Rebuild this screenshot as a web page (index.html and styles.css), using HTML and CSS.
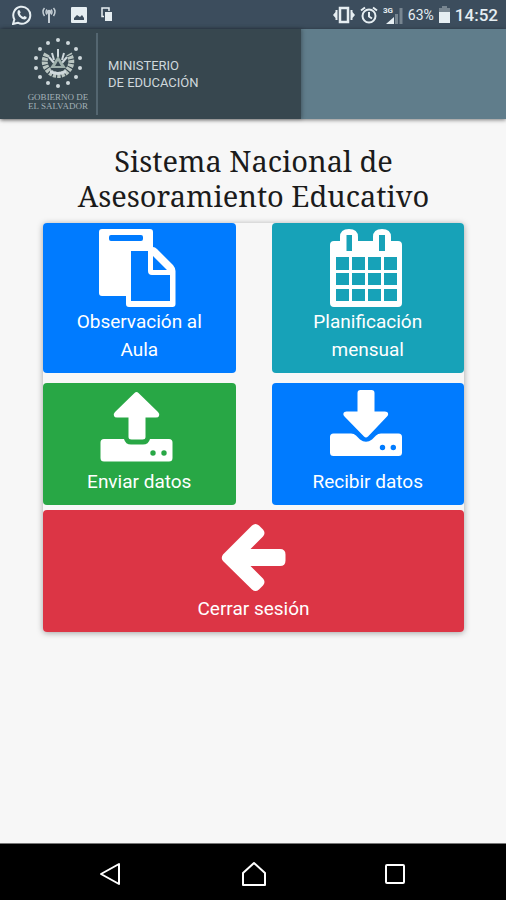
FILE: index.html
```html
<!DOCTYPE html>
<html lang="es">
<head>
    <meta charset="UTF-8">
    <meta name="viewport" content="width=device-width, initial-scale=1.0">
    <title>Sistema Nacional de Asesoramiento Educativo</title>
    <link rel="stylesheet" href="styles.css">
</head>
<body>
    <div class="status-bar">
        <div class="status-left">
            <svg width="20" height="20" viewBox="0 0 20 20">
                <path d="M1 19l1.400-4.600A8.500 8.500 0 1 1 5.800 17.700z" fill="none" stroke="currentColor" stroke-width="2"/>
                <path d="M6 5.500q1-1 1.800 0l.9 2-.9 1.300q1.200 2.200 3.400 3.200l1.200-1.100 2.300 1.100q.3 2-2 2.500-3 0-5.700-3Q4.500 8 6 5.500z" fill="currentColor"/>
            </svg>
            <svg class="dim" width="14" height="16" viewBox="0 0 14 16" fill="none" stroke="currentColor" stroke-width="1.500">
                <path d="M7 5v11" stroke-width="2"/>
                <path d="M2.500 1q-3 3.500 0 8M11.500 1q3 3.500 0 8M5 2.500q-2 2.500 0 5M9 2.500q2 2.500 0 5"/>
                <circle cx="7" cy="5" r="1.500" fill="currentColor"/>
            </svg>
            <svg width="16" height="16" viewBox="0 0 16 16" fill="currentColor">
                <path fill-rule="evenodd" d="M1 0h14q1 0 1 1v14q0 1-1 1H1q-1 0-1-1V1q0-1 1-1zM3 13h10v-2l-2-3-2 2-3-2-3 3z"/>
            </svg>
            <svg width="14" height="15" viewBox="0 0 12 15">
                <path d="M3 9.500H1V1h7v3" fill="none" stroke="currentColor" stroke-width="1.500"/>
                <path d="M4 5h7v9H4z" fill="currentColor"/>
            </svg>
        </div>
        <div class="status-right">
            <svg width="22" height="18" viewBox="0 0 22 18">
                <path d="M7 2h8v14H7z" fill="none" stroke="currentColor" stroke-width="2.500"/>
                <path d="M4.500 4v10H2.500v-2L0 9l2.500-3V4zM17.500 4v10h2v-2L22 9l-2.500-3V4z" fill="currentColor"/>
            </svg>
            <svg width="18" height="18" viewBox="0 0 18 18" fill="none" stroke="currentColor" stroke-width="2">
                <circle cx="9" cy="10" r="6.500"/>
                <path d="M9 6v4.500l3 2M1 4.500l4-3M17 4.500l-4-3"/>
            </svg>
            <svg width="20" height="18" viewBox="0 0 20 18" fill="currentColor">
                <text x="0" y="7" font-size="8" font-weight="700">3G</text>
                <path d="M3 18l8-7v7z"/>
                <path d="M12 8h3v10h-3zM16.500 2h3v16h-3z" opacity=".35"/>
            </svg>
            <span class="battery-text">63%</span>
            <svg width="11" height="17" viewBox="0 0 11 17" fill="currentColor">
                <path d="M3 0h5v2h3v4H0V2h3z" opacity=".35"/>
                <path d="M0 6h11v11H0z"/>
            </svg>
            <span class="clock">14:52</span>
        </div>
    </div>

    <header class="header">
        <div class="brand">
            <div class="logo">
                <svg width="52" height="52" viewBox="0 0 52 52" fill="currentColor">
                    <g>
                        <circle cx="26" cy="3" r="2"/><circle cx="36" cy="6" r="2"/>
                        <circle cx="44" cy="12" r="2"/><circle cx="48" cy="21" r="2"/>
                        <circle cx="48" cy="31" r="2"/><circle cx="44" cy="40" r="2"/>
                        <circle cx="36" cy="46" r="2"/><circle cx="26" cy="49" r="2"/>
                        <circle cx="16" cy="46" r="2"/><circle cx="8" cy="40" r="2"/>
                        <circle cx="4" cy="31" r="2"/><circle cx="4" cy="21" r="2"/>
                        <circle cx="8" cy="12" r="2"/><circle cx="16" cy="6" r="2"/>
                    </g>
                    <path d="M15 17q-5 9 1 16 4 5 10 5t10-5q6-7 1-16" fill="none" stroke="#b9c5c1" stroke-width="6" stroke-dasharray="3 1"/>
                    <path d="M26 12v8M20 16l2 7M32 16l-2 7M17 20l5 6M35 20l-5 6" stroke="#cfd8dc" stroke-width="2" fill="none"/>
                    <path d="M26 19l8 12H18z" fill="#9fb0ac"/>
                    <path d="M26 24l3 5h-6z" fill="#37474f"/>
                    <path d="M18 33q8 4 16 0v3q-8 4-16 0z" fill="#cfd8dc"/>
                </svg>
                <div class="logo-text">GOBIERNO DE<br>EL SALVADOR</div>
            </div>
            <div class="ministry">MINISTERIO<br>DE EDUCACIÓN</div>
        </div>
    </header>

    <main class="content">
        <h1>Sistema Nacional de Asesoramiento Educativo</h1>

        <div class="menu">
            <button type="button" class="btn btn-primary">
                <svg class="icon" viewBox="0 0 80 79" fill="currentColor">
                    <path fill-rule="evenodd" d="M3 0H51a3 3 0 0 1 3 3V18q2 0 4 2L74 36q2.500 3 2.500 6V75a3 3 0 0 1-3 3H30a3 3 0 0 1-3-3V67H3a3 3 0 0 1-3-3V3a3 3 0 0 1 3-3zM12 6q-2 0-2 2v2q0 2 2 2h30q2 0 2-2V8q0-2-2-2zM32 22v50h39V46H53q-4 0-4-4V22zM54 27v14h14z"/>
                </svg>
                <span>Observación al Aula</span>
            </button>
            <button type="button" class="btn btn-info">
                <svg class="icon" viewBox="0 0 80 79" fill="currentColor">
                    <path fill-rule="evenodd" d="M6 12h6V8q0-8 9-8T30 8v4h15V8q0-8 9-8T63 8v4h7q4 0 4 4v58q0 4-4 4H6q-4 0-4-4V16q0-4 4-4zM18.500 6v16h5.500V6zM51 6v16h6V6zM8 28v13h13V28zM24 28v13h13V28zM40 28v13h13V28zM56 28v13h13V28zM8 44v12h13V44zM24 44v12h13V44zM40 44v12h13V44zM56 44v12h13V44zM8 60v12h13V60zM24 60v12h13V60zM40 60v12h13V60zM56 60v12h13V60z"/>
                </svg>
                <span>Planificación mensual</span>
            </button>
            <button type="button" class="btn btn-success">
                <svg class="icon" viewBox="0 0 80 79" fill="currentColor">
                    <path d="M35.500 4q2-2 4 0L59 23q2 2 1 4-.5 1.500-3 1.500H46.500V48q0 2.500-3 2.500h-11q-3 0-3-2.500V28.500H18q-2.500 0-3-1.500-1-2 1-4z"/>
                    <path fill-rule="evenodd" d="M5 50h20q1.500 5.500 7 5.500h12q5.500 0 7-5.500h19q3.500 0 3.500 3.500v15.500q0 3.500-3.500 3.500H5q-3.500 0-3.500-3.500V53.500Q1.500 50 5 50zM51.300 64a2.700 2.700 0 1 0 5.400 0 2.700 2.700 0 1 0-5.400 0zM62.300 64a2.700 2.700 0 1 0 5.400 0 2.700 2.700 0 1 0-5.400 0z"/>
                </svg>
                <span>Enviar datos</span>
            </button>
            <button type="button" class="btn btn-primary">
                <svg class="icon" viewBox="0 0 80 79" fill="currentColor">
                    <path d="M32.500 1h11q3 0 3 3v18.500H57q2.500 0 3 1.500.7 2-1 3.500L40 47.500q-2 2-4 0L16.500 27.500q-1.700-1.500-1-3.500.5-1.500 3-1.500h11V4q0-3 3-3z"/>
                    <path fill-rule="evenodd" d="M5.500 44.500H23q3 0 5 2l4 4q6 4.500 12 0l4-4q2-2 5-2h17.500q3.500 0 3.500 3.500v15.500q0 3.500-3.500 3.500h-65q-3.500 0-3.500-3.500V48q0-3.500 3.500-3.500zM51.800 58.500a2.700 2.700 0 1 0 5.400 0 2.700 2.700 0 1 0-5.400 0zM62.600 58.500a2.700 2.700 0 1 0 5.400 0 2.700 2.700 0 1 0-5.400 0z"/>
                </svg>
                <span>Recibir datos</span>
            </button>
            <button type="button" class="btn btn-danger btn-block">
                <svg class="icon" viewBox="0 0 80 79" fill="currentColor">
                    <path d="M9 38.500L38 9.500q3.500-3 7 0l4 4q3 3.500 0 7L36.500 33H66q5.500 0 5.500 5.500v6Q71.500 50 66 50H36.500L49 62.500q3 3.500 0 7l-4 4q-3.500 3-7 0L9 45q-2.500-3 0-6.500z"/>
                </svg>
                <span>Cerrar sesión</span>
            </button>
        </div>
    </main>

    <nav class="nav-bar">
        <button type="button" aria-label="Atrás">
            <svg width="26" height="26" viewBox="0 0 26 26"><path d="M20 3v20L2 13z"/></svg>
        </button>
        <button type="button" aria-label="Inicio">
            <svg width="26" height="26" viewBox="0 0 26 26"><path d="M3 24V12L14 2l11 10v12z"/></svg>
        </button>
        <button type="button" aria-label="Recientes">
            <svg width="26" height="26" viewBox="0 0 26 26"><rect x="5" y="4" width="18" height="18" rx="1"/></svg>
        </button>
    </nav>
</body>
</html>
```
FILE: styles.css
```css
* {
    box-sizing: border-box;
}

body {
    margin: 0;
    min-height: 100vh;
    display: flex;
    flex-direction: column;
    background-color: #f7f7f7;
    font-family: Roboto, sans-serif;
}

svg {
    display: block;
}

/* Barra de estado */
.status-bar {
    display: flex;
    justify-content: space-between;
    align-items: center;
    height: 29px;
    padding: 0 8px 0 12px;
    background-color: #3c4d5d;
    color: #e6eef2;
}

.status-left,
.status-right {
    display: flex;
    align-items: center;
}

.status-left {
    gap: 13px;
}

.status-left .dim {
    margin: 0 2px 0 -3px;
    opacity: 0.8;
}

.status-right {
    gap: 5px;
}

.battery-text {
    font-size: 14px;
}

.clock {
    font-size: 17px;
    font-weight: 500;
}

/* Encabezado */
.header {
    display: flex;
    height: 90px;
    background-color: #607d8b;
    box-shadow: 0 1px 4px rgba(0, 0, 0, 0.5);
}

.brand {
    display: flex;
    align-items: center;
    width: 59.4%;
    background-color: #37474f;
    box-shadow: 1px 0 4px rgba(0, 0, 0, 0.3);
    color: #cfd8dc;
}

.logo {
    display: flex;
    flex-direction: column;
    align-items: center;
    width: 98px;
    height: 82px;
    padding: 4px 0 0 20px;
    border-right: 2px solid #546670;
}

.logo-text {
    padding-top: 4px;
    color: #a3b1b7;
    font-family: "Liberation Serif", serif;
    font-size: 9px;
    line-height: 9px;
    text-align: center;
    white-space: nowrap;
}

.ministry {
    padding-left: 10px;
    font-size: 13px;
    line-height: 17px;
}

/* Contenido */
.content {
    flex: 1;
    padding: 24px 42px 24px 43px;
}

h1 {
    margin: 0 0 10px;
    color: #1b1b1b;
    font-family: "Noto Serif", "Liberation Serif", serif;
    font-size: 29px;
    font-weight: 400;
    line-height: 35px;
    text-align: center;
}

.menu {
    display: grid;
    grid-template-columns: 1fr 1fr;
    column-gap: 36px;
    border-radius: 4px;
    box-shadow: 0 1px 6px rgba(0, 0, 0, 0.35);
    background-color: #f7f7f7;
}

.btn {
    display: flex;
    flex-direction: column;
    align-items: center;
    margin: 0 0 5px;
    padding: 6px 24px 9px;
    border: 0;
    border-radius: 4px;
    color: #fff;
    font-family: inherit;
    font-size: 19px;
    line-height: 28px;
    cursor: pointer;
}

.btn-primary {
    background-color: #007bff;
}

.btn-info {
    margin-bottom: 10px;
    background-color: #17a2b8;
}

.btn-primary:first-child {
    margin-bottom: 10px;
}

.btn-success {
    background-color: #28a745;
}

.btn-danger {
    background-color: #dc3545;
}

.btn-block {
    grid-column: 1 / -1;
    margin-bottom: 0;
}

.icon {
    width: 80px;
    height: 79px;
}

/* Botones de navegación */
.nav-bar {
    display: flex;
    justify-content: center;
    align-items: center;
    gap: 115px;
    height: 57px;
    padding-top: 4px;
    border-top: 1px solid #777;
    background-color: #000;
}

.nav-bar button {
    padding: 0;
    border: 0;
    background: none;
}

.nav-bar path,
.nav-bar rect {
    fill: none;
    stroke: #fff;
    stroke-width: 2;
    stroke-linejoin: round;
}
```
